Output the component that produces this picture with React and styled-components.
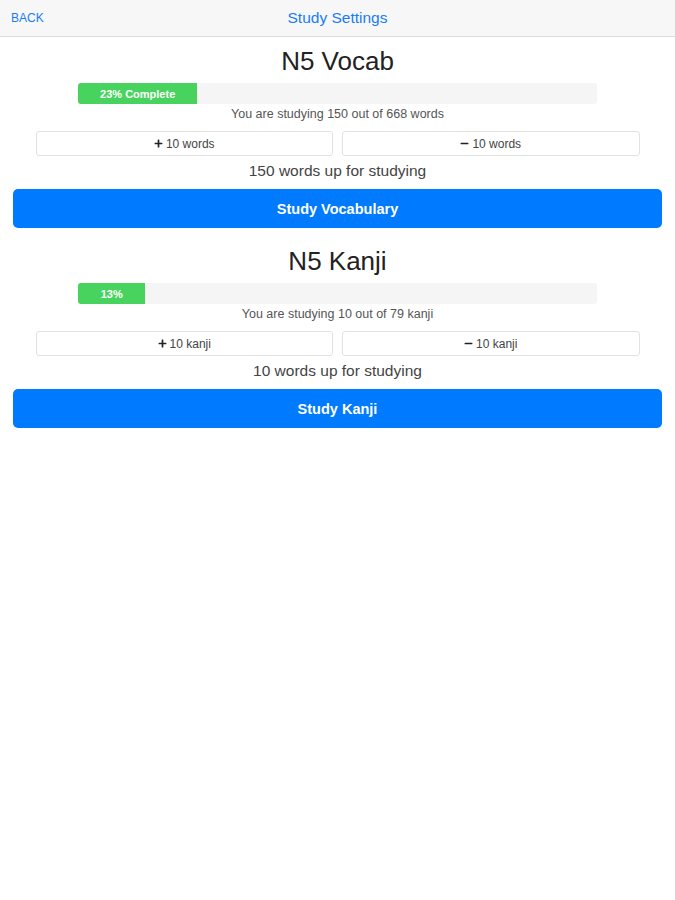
import React, { useState } from 'react';
import styled, { createGlobalStyle } from 'styled-components';
import { FaPlus, FaMinus } from 'react-icons/fa';

const GlobalStyle = createGlobalStyle`
  html, body {
    margin: 0;
    padding: 0;
    background: #ffffff;
    font-family: 'Liberation Sans', Arial, sans-serif;
  }
`;

const decks = [
  {
    id: 'vocab',
    title: 'N5 Vocab',
    unit: 'words',
    total: 668,
    showComplete: true,
    action: 'Study Vocabulary',
  },
  {
    id: 'kanji',
    title: 'N5 Kanji',
    unit: 'kanji',
    total: 79,
    showComplete: false,
    action: 'Study Kanji',
  },
];

export default function App() {
  const [counts, setCounts] = useState({ vocab: 150, kanji: 10 });

  function change(deck, amount) {
    setCounts((prev) => {
      const next = Math.min(deck.total, Math.max(0, prev[deck.id] + amount));
      return { ...prev, [deck.id]: next };
    });
  }

  return (
    <Page>
      <GlobalStyle />
      <NavBar>
        <BackLink type="button">BACK</BackLink>
        <NavTitle>Study Settings</NavTitle>
      </NavBar>
      <Content>
        {decks.map((deck) => {
          const count = counts[deck.id];
          const percent = Math.ceil((count / deck.total) * 100);
          return (
            <Section key={deck.id}>
              <DeckTitle>{deck.title}</DeckTitle>
              <Progress>
                <ProgressFill style={{ width: `${percent}%` }}>
                  {percent}%{deck.showComplete && ' Complete'}
                </ProgressFill>
              </Progress>
              <Caption>
                You are studying {count} out of {deck.total} {deck.unit}
              </Caption>
              <StepRow>
                <StepButton type="button" onClick={() => change(deck, 10)}>
                  <FaPlus size={9} /> 10 {deck.unit}
                </StepButton>
                <StepButton type="button" onClick={() => change(deck, -10)}>
                  <FaMinus size={9} /> 10 {deck.unit}
                </StepButton>
              </StepRow>
              <UpNext>{count} words up for studying</UpNext>
              <StudyButton type="button">{deck.action}</StudyButton>
            </Section>
          );
        })}
      </Content>
    </Page>
  );
}

const Page = styled.div`
  width: 675px;
  min-height: 900px;
  background: #ffffff;
`;

const NavBar = styled.header`
  position: relative;
  display: flex;
  align-items: center;
  justify-content: center;
  height: 36px;
  background: #f7f7f7;
  border-bottom: 1px solid #dcdcdc;
`;

const BackLink = styled.button`
  position: absolute;
  left: 11px;
  top: 50%;
  transform: translateY(-50%);
  padding: 0;
  border: none;
  background: none;
  color: #1a7cf5;
  font-family: 'Liberation Sans', Arial, sans-serif;
  font-size: 12px;
  cursor: pointer;
`;

const NavTitle = styled.h1`
  margin: 0;
  color: #1a7cf5;
  font-size: 15.5px;
  font-weight: normal;
`;

const Content = styled.main`
  display: flex;
  flex-direction: column;
  gap: 17px;
  padding: 8px 13px 0;
`;

const Section = styled.section`
  display: flex;
  flex-direction: column;
  align-items: center;
`;

const DeckTitle = styled.h2`
  margin: 0;
  height: 32px;
  line-height: 32px;
  color: #222;
  font-size: 26px;
  font-weight: normal;
`;

const Progress = styled.div`
  display: flex;
  width: 519px;
  height: 21px;
  margin-top: 6px;
  border-radius: 3px;
  background: #f5f5f5;
  overflow: hidden;
`;

const ProgressFill = styled.div`
  display: flex;
  align-items: center;
  justify-content: center;
  height: 100%;
  background: #47d35e;
  color: #ffffff;
  font-size: 11px;
  font-weight: bold;
  white-space: nowrap;
`;

const Caption = styled.p`
  margin: 3px 0 0;
  height: 14px;
  line-height: 14px;
  color: #555;
  font-size: 12.5px;
`;

const StepRow = styled.div`
  display: grid;
  grid-template-columns: 1fr 1fr;
  gap: 9px;
  width: 604px;
  margin-top: 10px;
`;

const StepButton = styled.button`
  display: flex;
  align-items: center;
  justify-content: center;
  gap: 3px;
  height: 25px;
  padding: 0;
  border: 1px solid #e2e2e2;
  border-radius: 3px;
  background: #ffffff;
  color: #444;
  font-family: 'Liberation Sans', Arial, sans-serif;
  font-size: 12px;
  cursor: pointer;

  svg {
    color: #222;
  }
`;

const UpNext = styled.p`
  margin: 6px 0 0;
  height: 18px;
  line-height: 18px;
  color: #444;
  font-size: 15.5px;
`;

const StudyButton = styled.button`
  width: 100%;
  height: 39px;
  margin-top: 9px;
  border: none;
  border-radius: 5px;
  background: #007aff;
  color: #ffffff;
  font-family: 'Liberation Sans', Arial, sans-serif;
  font-size: 14.5px;
  font-weight: bold;
  cursor: pointer;
`;
